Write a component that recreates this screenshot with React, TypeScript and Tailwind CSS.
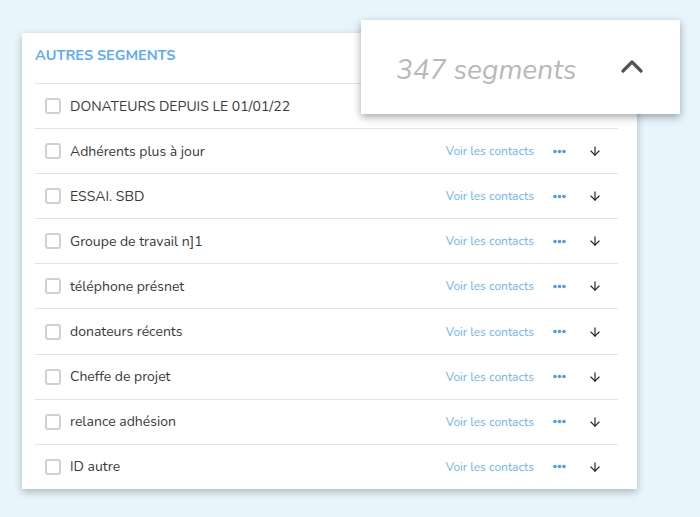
import { ArrowDown } from 'lucide-react';

const segments = [
  'DONATEURS DEPUIS LE 01/01/22',
  'Adhérents plus à jour',
  'ESSAI. SBD',
  'Groupe de travail n]1',
  'téléphone présnet',
  'donateurs récents',
  'Cheffe de projet',
  'relance adhésion',
  'ID autre',
];

function Dots() {
  return (
    <svg width="13" height="5" viewBox="0 0 13 5" className="text-[#4a9ff0]">
      <circle cx="2" cy="2.5" r="1.8" fill="currentColor" />
      <circle cx="6.5" cy="2.5" r="1.8" fill="currentColor" />
      <circle cx="11" cy="2.5" r="1.8" fill="currentColor" />
    </svg>
  );
}

export default function App() {
  return (
    <div className="relative w-[700px] h-[517px] bg-[#e8f5fd] overflow-hidden" style={{ fontFamily: 'Nunito, Lato, "Noto Sans", sans-serif' }}>
      <div className="pt-[33px] pl-[22px]">
        <div className="w-[615px] bg-white shadow-[0_3px_8px_rgba(0,0,0,0.25)] pl-[13px] pr-[19px]">
          {/* Header */}
          <div className="h-[50px] flex items-start pt-[12px]">
            <span className="text-[14.5px] font-bold text-[#5aacf5]">AUTRES SEGMENTS</span>
          </div>

          {/* Rows */}
          {segments.map((name, i) => (
            <div key={i} className="h-[45.1px] flex items-center border-t border-[#e2e2e2] pl-[10px] pr-[16px]">
              <div className="w-4 h-4 rounded-[3px] border-2 border-[#d0d0d0] shrink-0" />
              <span className="ml-[9px] text-[14px] text-[#3a3a3a]">{name}</span>
              {i > 0 && (
                <div className="ml-auto flex items-center">
                  <span className="text-[12px] text-[#6cb4f3]">Voir les contacts</span>
                  <span className="ml-[19px]"><Dots /></span>
                  <ArrowDown className="ml-[22px] w-[14px] h-[14px] text-[#222]" strokeWidth={2} />
                </div>
              )}
            </div>
          ))}
        </div>
      </div>

      {/* Popup */}
      <div className="absolute left-[361px] top-[20px] w-[319px] h-[94px] bg-white shadow-[0_3px_8px_rgba(0,0,0,0.35)] flex items-center pl-[35px] pr-[37px] pt-[6px]">
        <span className="text-[28px] italic text-[#b8b8b8]">347 segments</span>
        <svg width="22" height="14" viewBox="0 0 22 14" className="ml-auto mb-[8px] text-[#555]">
          <polyline points="2,12 11,3 20,12" fill="none" stroke="currentColor" strokeWidth="3.2" strokeLinecap="round" strokeLinejoin="round" />
        </svg>
      </div>
    </div>
  );
}
